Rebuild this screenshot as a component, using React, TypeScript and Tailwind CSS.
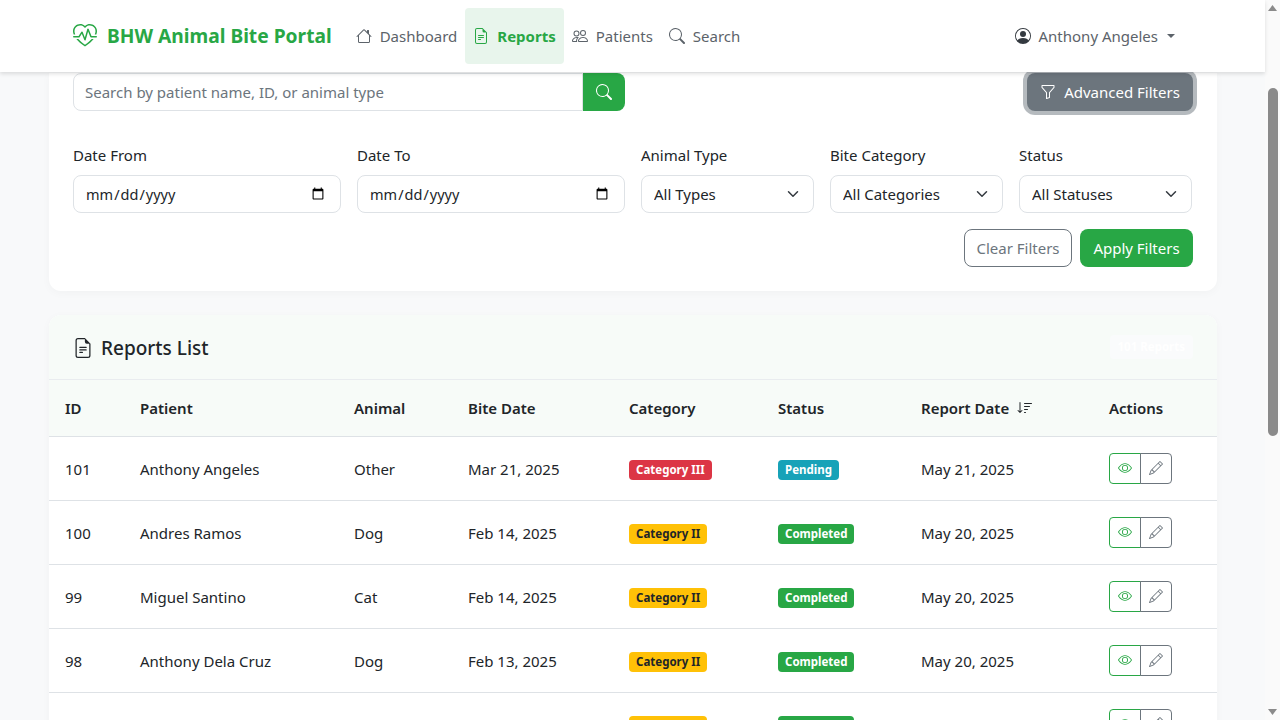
import { BsHeartPulse, BsHouse, BsFileEarmarkText, BsPeople, BsSearch, BsPersonCircle, BsFunnel, BsEye, BsPencil, BsSortDown } from "react-icons/bs";

const reports = [
  { id: 101, patient: "Anthony Angeles", animal: "Other", bite: "Mar 21, 2025", cat: "Category III", status: "Pending", date: "May 21, 2025" },
  { id: 100, patient: "Andres Ramos", animal: "Dog", bite: "Feb 14, 2025", cat: "Category II", status: "Completed", date: "May 20, 2025" },
  { id: 99, patient: "Miguel Santino", animal: "Cat", bite: "Feb 14, 2025", cat: "Category II", status: "Completed", date: "May 20, 2025" },
  { id: 98, patient: "Anthony Dela Cruz", animal: "Dog", bite: "Feb 13, 2025", cat: "Category II", status: "Completed", date: "May 20, 2025" },
  { id: 97, patient: "Rhoda Bernardo", animal: "Dog", bite: "Feb 13, 2025", cat: "Category II", status: "Completed", date: "May 20, 2025" },
];

const nav = [
  { label: "Dashboard", icon: BsHouse },
  { label: "Reports", icon: BsFileEarmarkText, active: true },
  { label: "Patients", icon: BsPeople },
  { label: "Search", icon: BsSearch },
];

const selects = [
  { label: "Bite Category", value: "All Categories" },
  { label: "Status", value: "All Statuses" },
];

const heads = [
  { label: "ID", w: "w-[75px]" },
  { label: "Patient", w: "w-[214px]" },
  { label: "Animal", w: "w-[114px]" },
  { label: "Bite Date", w: "w-[161px]" },
  { label: "Category", w: "w-[149px]" },
  { label: "Status", w: "w-[143px]" },
  { label: "Report Date", w: "w-[188px]" },
  { label: "Actions", w: "w-[124px]" },
];

function Select({ label, value }: { label: string; value: string }) {
  return (
    <div>
      <label className="mb-2 block leading-6">{label}</label>
      <div className="relative">
        <select className="h-[38px] w-full appearance-none rounded-lg border border-[#dee2e6] bg-white pl-3 pr-9 text-[#212529]">
          <option>{value}</option>
        </select>
        <svg className="pointer-events-none absolute right-[13px] top-[13px] h-3 w-4" viewBox="0 0 16 16" fill="none" stroke="#343a40" strokeWidth="2" strokeLinecap="round" strokeLinejoin="round">
          <path d="M2 5l6 6 6-6" />
        </svg>
      </div>
    </div>
  );
}

function DateField({ label }: { label: string }) {
  return (
    <div>
      <label className="mb-2 block leading-6">{label}</label>
      <input type="date" className="h-[38px] w-full rounded-lg border border-[#dee2e6] bg-white pb-0 pl-[11px] pr-[13px] pt-px text-[14.5px] text-[#212529]" />
    </div>
  );
}

export default function App() {
  return (
    <div className="flex h-screen overflow-hidden bg-[#f8f9fa] font-['Noto_Sans','Open_Sans',sans-serif] text-[15px] text-[#212529]">
      <div className="flex min-w-0 flex-1 flex-col">
        <nav className="relative z-10 flex h-[72px] shrink-0 items-center bg-white pl-[73px] pr-[90px] shadow-[0_2px_4px_rgba(0,0,0,0.12)]">
          <BsHeartPulse className="mr-[10px] h-6 w-6 text-[#28a745]" />
          <span className="mr-4 text-[19.2px] font-bold text-[#28a745]">BHW Animal Bite Portal</span>
          {nav.map((n) => {
            const I = n.icon;
            return (
              <a
                key={n.label}
                className={`flex h-14 items-center gap-2 rounded px-2 ${n.active ? "bg-[#e8f5ec] font-bold text-[#28a745]" : "text-[#5c636a]"}`}
              >
                <I className="h-4 w-4" />
                {n.label}
              </a>
            );
          })}
          <div className="ml-auto flex items-center gap-2 text-[#5c636a]">
            <BsPersonCircle className="h-4 w-4 text-[#343a40]" />
            Anthony Angeles
            <span className="ml-px border-x-[4.5px] border-t-[4.5px] border-x-transparent border-t-[#5c636a]" />
          </div>
        </nav>

        <main className="flex flex-col gap-6 pl-[49px] pr-[48px] pt-px">
          <section className="rounded-b-xl bg-white px-6 pb-6 shadow-[0_2px_10px_rgba(0,0,0,0.03)]">
            <div className="flex justify-between">
              <div className="flex w-[552px]">
                <input
                  placeholder="Search by patient name, ID, or animal type"
                  className="h-[38px] flex-1 rounded-l-lg border border-[#dee2e6] bg-white pl-[11px] pr-3 placeholder:text-[#6c757d]"
                />
                <button className="grid h-[38px] w-[42px] place-items-center rounded-r-lg bg-[#28a745] text-white">
                  <BsSearch className="h-4 w-4" />
                </button>
              </div>
              <button className="flex h-[38px] w-[166px] items-center justify-center gap-2 rounded-lg bg-[#6c757d] text-white shadow-[0_0_0_4px_rgba(108,117,125,0.5)]">
                <BsFunnel className="h-4 w-4" />
                Advanced Filters
              </button>
            </div>

            <div className="mt-[32px] grid w-[1119px] grid-cols-[268px_268px_1fr_1fr_1fr] gap-4">
              <DateField label="Date From" />
              <DateField label="Date To" />
              <Select label="Animal Type" value="All Types" />
              {selects.map((s) => (
                <Select key={s.label} label={s.label} value={s.value} />
              ))}
            </div>

            <div className="mt-4 flex justify-end gap-2">
              <button className="h-[38px] w-[108px] rounded-lg border border-[#6c757d] bg-white text-[#6c757d]">Clear Filters</button>
              <button className="h-[38px] w-[113px] rounded-lg bg-[#28a745] text-white">Apply Filters</button>
            </div>
          </section>

          <section className="overflow-hidden rounded-xl bg-white shadow-[0_2px_10px_rgba(0,0,0,0.03)]">
            <div className="flex h-[65px] items-center justify-between border-b border-[#e9ecef] bg-[#f7fbf8] pl-6 pr-6">
              <h2 className="flex items-center gap-2 pt-[2px] text-[19px] font-medium leading-none">
                <BsFileEarmarkText className="h-5 w-5" />
                Reports List
              </h2>
              <span className="rounded bg-[#fafbfc] px-2 py-[3px] text-[11.5px] font-bold text-white">101 Reports</span>
            </div>
            <table className="w-full table-fixed border-collapse">
              <thead>
                <tr className="h-[56px] border-b border-[#dee2e6] bg-[#f7fbf8] text-left">
                  {heads.map((h) => (
                    <th key={h.label} className={`${h.w} px-4 font-semibold`}>
                      {h.label === "Report Date" ? (
                        <span className="flex items-center gap-2">
                          {h.label}
                          <BsSortDown className="h-4 w-4" />
                        </span>
                      ) : (
                        h.label
                      )}
                    </th>
                  ))}
                </tr>
              </thead>
              <tbody>
                {reports.map((r) => (
                  <tr key={r.id} className="h-[64px] border-b border-[#dee2e6]">
                    <td className="px-4 pt-[2px]">{r.id}</td>
                    <td className="px-4 pt-[2px]">{r.patient}</td>
                    <td className="px-4 pt-[2px]">{r.animal}</td>
                    <td className="px-4 pt-[2px]">{r.bite}</td>
                    <td className="px-4">
                      <span
                        className={`inline-block rounded px-[7px] py-[3px] text-[11.5px] font-bold leading-[14px] ${
                          r.cat === "Category III" ? "bg-[#dc3545] text-white" : "bg-[#ffc107] text-[#212529]"
                        }`}
                      >
                        {r.cat}
                      </span>
                    </td>
                    <td className="px-4">
                      <span
                        className={`inline-block rounded px-[7px] py-[3px] text-[11.5px] font-bold leading-[14px] text-white ${
                          r.status === "Pending" ? "bg-[#17a2b8]" : "bg-[#28a745]"
                        }`}
                      >
                        {r.status}
                      </span>
                    </td>
                    <td className="px-4 pt-[2px]">{r.date}</td>
                    <td className="px-4">
                      <div className="flex">
                        <button className="grid h-[31px] w-[32px] place-items-center rounded-l border border-[#28a745] text-[#28a745]">
                          <BsEye className="h-[14px] w-[14px]" />
                        </button>
                        <button className="-ml-px grid h-[31px] w-[32px] place-items-center rounded-r border border-[#6c757d] text-[#6c757d]">
                          <BsPencil className="h-[14px] w-[14px]" />
                        </button>
                      </div>
                    </td>
                  </tr>
                ))}
              </tbody>
            </table>
          </section>
        </main>
      </div>

      <div className="relative h-full w-[15px] shrink-0 bg-[#fafafa]">
        <svg className="absolute left-[3px] top-[5px] h-[6px] w-[9px]" viewBox="0 0 9 6" fill="#8a8a8a"><path d="M4.5 0L9 6H0z" /></svg>
        <div className="absolute left-[3px] top-[88px] h-[348px] w-[10px] rounded-[5px] bg-[#8a8a8a]" />
        <svg className="absolute bottom-[5px] left-[3px] h-[6px] w-[9px]" viewBox="0 0 9 6" fill="#8a8a8a"><path d="M0 0H9L4.5 6z" /></svg>
      </div>
    </div>
  );
}
